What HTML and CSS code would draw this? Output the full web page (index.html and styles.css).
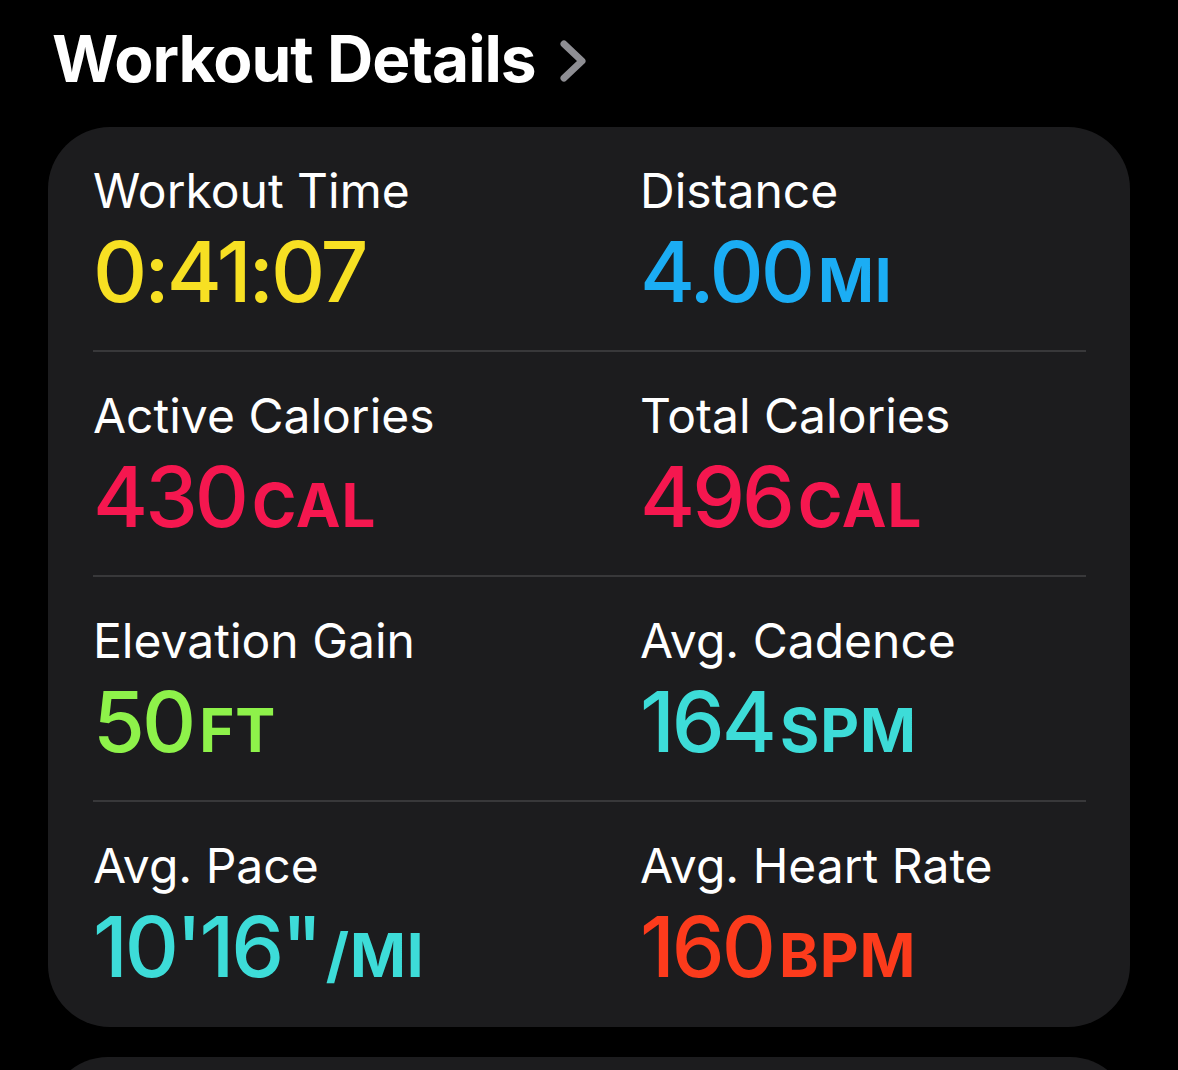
FILE: index.html
```
<!DOCTYPE html>
<html>
<head>
    <title>Workout Details</title>
    <meta name="viewport" content="width=device-width, initial-scale=1.0">
    <link rel="stylesheet" href="styles.css">
</head>
<body>
    <h1 class="section-title">Workout Details
        <svg class="chevron" width="30" height="44" viewBox="0 0 30 44">
            <path d="M6 5 L24 22 L6 39" fill="none" stroke="#8e8e93" stroke-width="7" stroke-linecap="round" stroke-linejoin="round"/>
        </svg>
    </h1>

    <div class="card">
        <div class="row">
            <div class="stat">
                <div class="label">Workout Time</div>
                <div class="value yellow">0:41:07</div>
            </div>
            <div class="stat">
                <div class="label">Distance</div>
                <div class="value blue">4.00<span class="unit">MI</span></div>
            </div>
        </div>
        <div class="row">
            <div class="stat">
                <div class="label">Active Calories</div>
                <div class="value pink">430<span class="unit">CAL</span></div>
            </div>
            <div class="stat">
                <div class="label">Total Calories</div>
                <div class="value pink">496<span class="unit">CAL</span></div>
            </div>
        </div>
        <div class="row">
            <div class="stat">
                <div class="label">Elevation Gain</div>
                <div class="value green">50<span class="unit">FT</span></div>
            </div>
            <div class="stat">
                <div class="label">Avg. Cadence</div>
                <div class="value cyan">164<span class="unit">SPM</span></div>
            </div>
        </div>
        <div class="row">
            <div class="stat">
                <div class="label">Avg. Pace</div>
                <div class="value cyan">10'16"<span class="unit">/MI</span></div>
            </div>
            <div class="stat">
                <div class="label">Avg. Heart Rate</div>
                <div class="value red">160<span class="unit">BPM</span></div>
            </div>
        </div>
    </div>

    <div class="card next"></div>
</body>
</html>
```

FILE: styles.css
```
body {
    margin: 0;
    background-color: #000;
    font-family: Inter, "Noto Sans", Arial, sans-serif;
    color: #fff;
    overflow: hidden;
}

.section-title {
    display: flex;
    align-items: flex-start;
    gap: 22px;
    margin: 0;
    padding: 20px 0 0 52px;
    height: 127px;
    box-sizing: border-box;
    font-size: 64px;
    font-weight: 700;
    letter-spacing: -1px;
}

.chevron {
    margin-top: 19px;
}

.card {
    margin-left: 48px;
    width: 1082px;
    background-color: #1c1c1e;
    border-radius: 62px;
    padding: 0 44px 0 45px;
    box-sizing: border-box;
}

.card.next {
    margin-top: 30px;
    height: 120px;
}

.row {
    display: grid;
    grid-template-columns: 547px 1fr;
    height: 225px;
    border-bottom: 2px solid #38383a;
    box-sizing: border-box;
    padding-top: 36px;
}

.row:last-child {
    border-bottom: none;
}

.label {
    font-size: 48px;
    line-height: 56px;
    font-weight: 400;
}

.value {
    margin-top: 5px;
    font-size: 84px;
    line-height: 96px;
    font-weight: 500;
    letter-spacing: -3px;
}

.unit {
    font-size: 60px;
    font-weight: 700;
    letter-spacing: 1px;
    margin-left: 6px;
}

.yellow { color: #f7e023; }
.blue { color: #1badf4; }
.pink { color: #f5174f; }
.green { color: #8ef24a; }
.cyan { color: #3ddcd8; }
.red { color: #fc3b1c; }
```
